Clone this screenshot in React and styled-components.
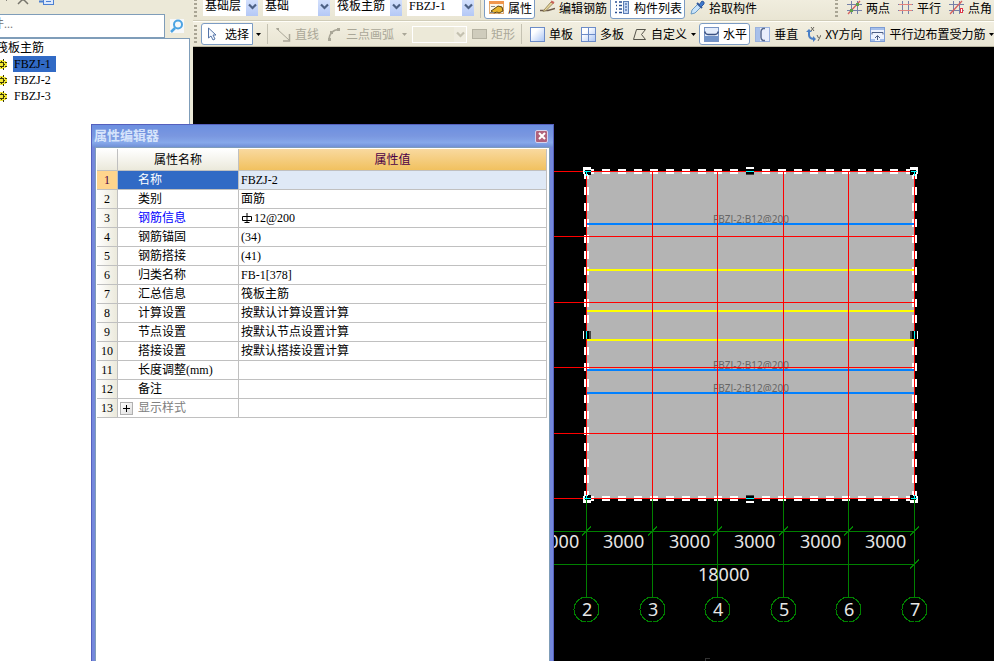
import React from 'react';
import styled, { createGlobalStyle, css } from 'styled-components';

const GlobalStyle = createGlobalStyle`
  * {
    box-sizing: border-box;
  }

  body {
    margin: 0;
    overflow: hidden;
    background: #ece9d8;
    font-family: "Liberation Serif", "Noto Sans CJK SC", sans-serif;
    font-size: 12px;
    color: #000;
  }

  button, input, select {
    font: inherit;
    color: inherit;
    margin: 0;
  }
`;

const App = () => {
  return (
    <Window>
      <GlobalStyle />
      <SidePanel />
      <Workspace>
        <ComponentBar />
        <DrawBar />
        <Drawing />
      </Workspace>
      <PropertyEditor />
    </Window>
  );
};

/* ---------- icons ---------- */

const Icon = ({ children, w = 15, h = 15 }) => (
  <svg width={w} height={h} viewBox={`0 0 ${w} ${h}`} fill="none" aria-hidden="true">
    {children}
  </svg>
);

const ArrowDown = ({ color = '#000' }) => (
  <Icon w={5} h={3}><path d="M0 0h5L2.5 3z" fill={color} /></Icon>
);

const Chevron = ({ color }) => (
  <Icon w={9} h={7}><path d="M1 1.5l3.5 3.5L8 1.5" stroke={color} strokeWidth="2.2" /></Icon>
);

const PropertyIcon = () => (
  <Icon>
    <rect x="0.5" y="1.5" width="14" height="12" fill="#fdf6e6" stroke="#e0aa72" />
    <path d="M0 2.5h15" stroke="#f0964c" strokeWidth="3" />
    <path d="M2 6.5h4" stroke="#8a8a8a" />
    <path d="M2 11l3-2 4-3 4 1 1 4-4 2-2-1-3 1z" fill="#e8b52c" stroke="#5a4310" />
    <path d="M1 12.5h4" stroke="#8a8a8a" />
  </Icon>
);

const PencilIcon = () => (
  <Icon>
    <path d="M0 10.500h8l7-2" stroke="#6b5a4a" strokeWidth="1.500" />
    <path d="M4 10l7-8 2 1.500-7 7-3 1z" fill="#e8d79b" stroke="#9a8c62" />
    <path d="M11 1.500l3 1.500" stroke="#c8635a" strokeWidth="2" />
  </Icon>
);

const ListIcon = () => (
  <Icon>
    <path d="M0 2h2M4 2h3M1 5.500h1M4 5.500h3M1 9h1M4 9h3M0 12.500h2M4 12.500h3" stroke="#2a4f92" strokeWidth="1.5" />
    <rect x="8.5" y="1.5" width="5" height="12" fill="#c6d8f4" stroke="#5d7fb5" />
    <path d="M10 4h2M10 7h2M10 10h2" stroke="#2a4f92" />
  </Icon>
);

const DropperIcon = () => (
  <Icon>
    <path d="M1 14l1-4 6-6 3 3-6 6z" fill="#c9e4fb" stroke="#6a9ac4" />
    <path d="M7 3l5 5" stroke="#31599c" strokeWidth="2" />
    <path d="M9 5l3-4 2 1v2l-3 3z" fill="#3e79cd" stroke="#31599c" />
  </Icon>
);

const AxisIcon = ({ slash, point }) => (
  <Icon>
    <path d="M4.5 1v13M10.5 1v13M0 4.5h15M0 10.5h15" stroke="#7580a8" />
    {slash ? <path d="M1 14L13 1" stroke="#d6605e" strokeWidth="1.3" /> : <path d="M1 4.500h13M1 10.500h13" stroke="#e3837d" />}
    {point === 'two' && <path d="M3 9h3v3H3zM9 3h3v3H9z" fill="#5fa04a" />}
    {point === 'corner' && <rect x="11.500" y="8.500" width="2" height="4" fill="#fff" stroke="#e0384a" />}
  </Icon>
);

const CursorIcon = () => (
  <Icon w={10} h={14}>
    <path d="M1.5 1v10l2.5-2 2 4 2-1-2-4h3z" fill="#f4f8ff" stroke="#5575a8" />
  </Icon>
);

const LineIcon = () => (
  <Icon>
    <path d="M1 2l12 11" stroke="#aaa798" />
    <path d="M13.5 7v7H7" stroke="#aaa798" strokeWidth="1.5" />
    <path d="M0 1h3v2H1z" fill="#aaa798" />
  </Icon>
);

const ArcIcon = () => (
  <Icon>
    <path d="M2 13C2 7 6 2.500 12 2.500" stroke="#aaa798" strokeWidth="1.5" />
    <path d="M1 11h3v3H1zM3 4h3v3H3zM10 1h3v3h-3z" fill="#aaa798" />
  </Icon>
);

const RectIcon = () => (
  <Icon><rect x="0.5" y="2.5" width="14" height="9" fill="#cfccbc" stroke="#b5b2a2" /></Icon>
);

const SlabIcon = ({ multi }) => (
  <Icon>
    <defs>
      <linearGradient id="slab" x1="0" y1="0" x2="1" y2="1">
        <stop offset="0.3" stopColor="#fff" />
        <stop offset="1" stopColor="#a9c4f4" />
      </linearGradient>
    </defs>
    <rect x="0.5" y="0.5" width="14" height="14" fill="url(#slab)" stroke="#6c8cc8" />
    {multi && <path d="M7.5 1v13M1 7.5h13" stroke="#6c8cc8" />}
  </Icon>
);

const PolygonIcon = () => (
  <Icon>
    <path d="M4.5 2.5h9l-4 5 4 5H1.5z" stroke="#55534a" />
  </Icon>
);

const HorizontalIcon = () => (
  <Icon>
    <rect x="0.5" y="0.5" width="14" height="14" fill="#e5edfb" stroke="#7894c4" />
    <path d="M1 9h13v5H1z" fill="#7294c9" />
    <path d="M1 4.500v1q1 2 3 2h7q2 0 3-2v-1" stroke="#3a5080" strokeWidth="1.5" />
  </Icon>
);

const VerticalIcon = () => (
  <Icon>
    <rect x="0.5" y="0.5" width="14" height="14" fill="#e9effc" stroke="#9ab2de" />
    <path d="M1 1h4v13H1z" fill="#a8c0ea" />
    <path d="M10 1.500H8q-2 1-2 3v6q0 2 2 3h2" stroke="#5a6c90" strokeWidth="1.500" />
  </Icon>
);

const XYIcon = () => (
  <Icon>
    <path d="M3 4v4q0 4 6 4" stroke="#4a7fc6" strokeWidth="2" />
    <path d="M0 5l3-3 3 3zM7 9l3 3-3 3z" fill="#4a7fc6" />
    <path d="M5 0l3 4M8 0L5 4M11 8l1.500 3M15 8l-3 6" stroke="#66645c" />
  </Icon>
);

const EdgeIcon = () => (
  <Icon>
    <rect x="0.5" y="0.5" width="14" height="14" fill="#eef3fd" stroke="#7c9cd4" />
    <path d="M1 2h13" stroke="#a5bfea" strokeWidth="2" />
    <path d="M2 7.500V5.500h11v2M7.500 13V9M5 11l2.500-2.500L10 11" stroke="#4d5f85" />
    <path d="M1 13h4M10 13h4" stroke="#a5bfea" strokeWidth="2" />
  </Icon>
);

const GearIcon = () => (
  <Icon w={11} h={11}>
    <path d="M3 1h5v1h2v2h1v3h-1v2H8v1H3V9H1V7H0V4h1V2h2z" fill="#f2e830" />
    <path d="M3.500 0v2M7.500 0v2M3.500 9v2M7.500 9v2M0 3.500h2M0 7.500h2M9 3.500h2M9 7.500h2" stroke="#3a380a" />
    <rect x="3.500" y="3.500" width="4" height="4" stroke="#3a380a" />
    <path d="M5 2h1v1H5zM5 8h1v1H5zM2 5h1v1H2zM8 5h1v1H8z" fill="#3a380a" />
  </Icon>
);

// hot rolled bar grade mark
const RebarIcon = () => (
  <Icon w={11} h={11}>
    <path d="M1.5 3.5h9v4h-9zM6 0v10M3.500 9.500h5" stroke="#000" />
  </Icon>
);

/* ---------- side panel ---------- */

const SidePanel = () => (
  <Side>
    <SideTools>
      <Icon w={5} h={5}><path d="M4 0h2v3" stroke="#222" /></Icon>
      <Icon w={12} h={5}><path d="M1 4l4-4h2l4 4" stroke="#77756c" strokeWidth="1.5" /></Icon>
      <Icon w={15} h={5}>
        <path d="M0 1.5h5" stroke="#4c80d2" strokeWidth="2" />
        <rect x="4.5" y="-4.5" width="10" height="9" fill="#dce8fb" stroke="#4c80d2" />
        <path d="M7 1.5h5" stroke="#4c80d2" />
      </Icon>
    </SideTools>
    <SearchRow>
      <SearchInput aria-label="搜索构件" placeholder="搜索构件..." />
      <SearchButton aria-label="搜索">
        <Icon w={14} h={14}>
          <circle cx="8" cy="5.5" r="4" stroke="#4ba3e3" strokeWidth="2" />
          <path d="M5 9l-4 4" stroke="#4ba3e3" strokeWidth="2.5" />
        </Icon>
      </SearchButton>
    </SearchRow>
    <Tree>
      <TreeRoot>筏板主筋</TreeRoot>
      {['FBZJ-1', 'FBZJ-2', 'FBZJ-3'].map((name, i) => (
        <TreeItem key={name}>
          <GearIcon />
          <TreeLabel $active={i === 0}>{name}</TreeLabel>
        </TreeItem>
      ))}
    </Tree>
  </Side>
);

/* ---------- toolbars ---------- */

const Tool = ({ icon, children, active, disabled, menu }) => (
  <ToolButton $active={active} disabled={disabled}>
    {icon}
    <span>{children}</span>
    {menu && <ArrowDown color={disabled ? '#aaa798' : '#000'} />}
  </ToolButton>
);

const Picker = ({ label, value, width }) => (
  <PickerBox $width={width}>
    <select aria-label={label} defaultValue={value}>
      <option>{value}</option>
    </select>
    <PickerArrow><Chevron color="#4d6185" /></PickerArrow>
  </PickerBox>
);

const ComponentBar = () => (
  <TopBar>
    <Grip />
    <Pickers>
      <Picker label="楼层" value="基础层" width={55} />
      <Picker label="构件类别" value="基础" width={67} />
      <Picker label="构件类型" value="筏板主筋" width={67} />
      <Picker label="构件" value="FBZJ-1" width={67} />
    </Pickers>
    <Divider />
    <Tool active icon={<PropertyIcon />}>属性</Tool>
    <Tool icon={<PencilIcon />}>编辑钢筋</Tool>
    <Tool active icon={<ListIcon />}>构件列表</Tool>
    <Tool icon={<DropperIcon />}>拾取构件</Tool>
    <BarEnd />
    <AxisTools>
      <Grip />
      <Tool icon={<AxisIcon slash point="two" />}>两点</Tool>
      <Tool icon={<AxisIcon />}>平行</Tool>
      <Tool icon={<AxisIcon slash point="corner" />}>点角</Tool>
    </AxisTools>
  </TopBar>
);

const DrawBar = () => (
  <BottomBar>
    <Grip />
    <SelectButton>
      <CursorIcon />
      <span>选择</span>
    </SelectButton>
    <MenuButton aria-label="选择方式"><ArrowDown /></MenuButton>
    <Divider />
    <Tool disabled icon={<LineIcon />}>直线</Tool>
    <Tool disabled menu icon={<ArcIcon />}>三点画弧</Tool>
    <PickerBox $width={55} $off>
      <select aria-label="画法" disabled />
      <PickerArrow $off><Chevron color="#c4c1b0" /></PickerArrow>
    </PickerBox>
    <Tool disabled icon={<RectIcon />}>矩形</Tool>
    <Divider />
    <Tool icon={<SlabIcon />}>单板</Tool>
    <Tool icon={<SlabIcon multi />}>多板</Tool>
    <Tool menu icon={<PolygonIcon />}>自定义</Tool>
    <Tool active icon={<HorizontalIcon />}>水平</Tool>
    <Tool icon={<VerticalIcon />}>垂直</Tool>
    <Tool icon={<XYIcon />}>XY方向</Tool>
    <Tool menu icon={<EdgeIcon />}>平行边布置受力筋</Tool>
  </BottomBar>
);

/* ---------- drawing ---------- */

const AXIS_X = [586, 652, 717, 783, 848, 914];
const AXIS_Y = [171, 236, 302, 367, 433, 498];
const BARS = [
  [223, '#0080ff'], [269, '#ffff00'], [310, '#ffff00'],
  [339, '#ffff00'], [369, '#0080ff'], [392, '#0080ff'],
];

const Drawing = () => (
  <Canvas>
    {/* model space origin is the window corner */}
    <g transform="translate(-193 -47)" shapeRendering="crispEdges">
      <rect x="586" y="171" width="328" height="327" fill="#b4b4b4" />
      {[223, 369, 392].map((y) => (
        <BarText key={y} x="713" y={y}>FBZJ-2:B12@200</BarText>
      ))}
      <path d="M586 171.5H914M586 498.5H914M586.5 171V498M914.5 171V498" stroke="#fff" strokeWidth="5" strokeDasharray="8 8" />
      {BARS.map(([y, color]) => (
        <rect key={y} x="587" y={y} width="327" height="2" fill={color} />
      ))}
      {AXIS_Y.map((y) => <rect key={y} x="500" y={y} width="415" height="1" fill="#f00" />)}
      {AXIS_X.map((x) => <rect key={x} x={x} y="171" width="1" height="327" fill="#f00" />)}

      {[586, 914].map((x) => [171, 498].map((y) => {
        const sx = x === 586 ? 1 : -1;
        const sy = y === 171 ? 1 : -1;
        return (
          <g key={`${x}-${y}`} transform={`translate(${x + 0.5} ${y + 0.5}) scale(${sx} ${sy})`}>
            <path d="M-3.5-4.5h8v2h-3v5h-5z" fill="#fff" />
            <path d="M-1.5-1.5h6v5h-3v-1h-3z" fill="#000" />
            <path d="M-2.5 0H4M0 0V4" stroke="#0ff" />
          </g>
        );
      }))}
      {[171, 498].map((y) => (
        <g key={y} transform={`translate(750 ${y + 0.5}) scale(1 ${y === 171 ? 1 : -1})`}>
          <path d="M-4-4.5h8v2h-8z" fill="#fff" />
          <path d="M-4-2.5h8v5h-8z" fill="#000" />
          <path d="M-4 2.5h8v1h-8z" fill="#444" />
          <path d="M-4 0h8" stroke="#0ff" />
        </g>
      ))}
      {[586, 914].map((x) => (
        <g key={x} transform={`translate(${x + 0.5} 335) scale(${x === 586 ? 1 : -1} 1)`}>
          <path d="M-3.5-4h1v8h-1z" fill="#fff" />
          <path d="M-2.5-4h5v8h-5z" fill="#000" />
          <path d="M2.5-4h2v8h-2z" fill="#444" />
          <path d="M0-4v8" stroke="#0ff" />
        </g>
      ))}

      <g stroke="#008000">
        <path d="M500 531.5H914M500 564.5H914M910 568.5l9-9" />
        {AXIS_X.map((x) => (
          <path key={x} d={`M${x + 0.5} 499V597M${x - 4} 535.5l9-9`} />
        ))}
        {AXIS_X.map((x) => (
          <circle key={x} cx={x + 0.5} cy="609.5" r="12.5" />
        ))}
      </g>
      {[538, 603, 669, 734, 800, 865].map((x) => (
        <DimText key={x} x={x} y="548">3000</DimText>
      ))}
      <DimText x="698" y="581">18000</DimText>
      {AXIS_X.map((x, i) => (
        <DimText key={x} x={x - 4} y="616">{i + 2}</DimText>
      ))}
      <path d="M705 658.5h5M705.5 658v3" stroke="#333" />
    </g>
  </Canvas>
);

/* ---------- property editor ---------- */

const PROPS = [
  ['名称', 'FBZJ-2'],
  ['类别', '面筋'],
  ['钢筋信息', '12@200'],
  ['钢筋锚固', '(34)'],
  ['钢筋搭接', '(41)'],
  ['归类名称', 'FB-1[378]'],
  ['汇总信息', '筏板主筋'],
  ['计算设置', '按默认计算设置计算'],
  ['节点设置', '按默认节点设置计算'],
  ['搭接设置', '按默认搭接设置计算'],
  ['长度调整(mm)', ''],
  ['备注', ''],
  ['显示样式', ''],
];

const PropertyEditor = () => (
  <Dialog role="dialog" aria-label="属性编辑器">
    <TitleBar>
      <Title>属性编辑器</Title>
      <CloseButton aria-label="关闭">
        <Icon w={8} h={8}><path d="M1 1l6 6M7 1L1 7" stroke="#fff" strokeWidth="2" /></Icon>
      </CloseButton>
    </TitleBar>
    <DialogBody>
      <Grid>
        <colgroup>
          <col width="21" />
          <col width="121" />
          <col />
        </colgroup>
        <thead>
          <tr>
            <HeadCell />
            <HeadCell>属性名称</HeadCell>
            <HeadCell $active>属性值</HeadCell>
          </tr>
        </thead>
        <tbody>
          {PROPS.map(([name, value], i) => (
            <tr key={name}>
              <NumCell $active={i === 0}>{i + 1}</NumCell>
              <NameCell $active={i === 0} $link={i === 2} $dim={i === 12}>
                <NameInner>
                  <Gutter>
                    {i === 12 && (
                      <Expander aria-label="展开">
                        <Icon w={7} h={7}><path d="M0 3.5h7M3.5 0v7" stroke="#000" /></Icon>
                      </Expander>
                    )}
                  </Gutter>
                  {name}
                </NameInner>
              </NameCell>
              <ValueCell $active={i === 0}>
                <ValueInner>
                  {i === 2 && <RebarIcon />}
                  {value}
                </ValueInner>
              </ValueCell>
            </tr>
          ))}
        </tbody>
      </Grid>
    </DialogBody>
  </Dialog>
);

/* ---------- styles ---------- */

const Window = styled.div`
  position: relative;
  display: flex;
  height: 100vh;
  overflow: hidden;
`;

/* the docked panel runs past the left edge of the window */
const Side = styled.aside`
  flex: none;
  display: flex;
  flex-direction: column;
  width: 253px;
  margin-left: -60px;
  padding-right: 3px;
  background: #ece9d8;
`;

const SideTools = styled.div`
  display: flex;
  gap: 10px;
  height: 13px;
  padding-left: 62px;
`;

const SearchRow = styled.div`
  display: flex;
  align-items: center;
  gap: 5px;
  height: 25px;
`;

const SearchInput = styled.input`
  width: 225px;
  height: 24px;
  padding: 0 0 2px 15px;
  border: 1px solid #7f9db9;
  background: #fff;
  outline: none;

  &::placeholder {
    color: #777;
    opacity: 1;
  }
`;

const SearchButton = styled.button`
  display: flex;
  padding: 0;
  border: 0;
  background: #f6f8fa;
`;

const Tree = styled.ul`
  flex: 1;
  margin: 0;
  padding: 1px 0 0;
  list-style: none;
  background: #fff;
  border-top: 1px solid #7f9db9;
  border-right: 1px solid #7f9db9;
`;

const TreeRoot = styled.li`
  height: 16px;
  padding-left: 56px;
  line-height: 16px;
`;

const TreeItem = styled.li`
  display: flex;
  align-items: center;
  gap: 6px;
  height: 16px;
  padding-left: 56px;
`;

const TreeLabel = styled.span`
  padding: 0 5px 0 1px;
  line-height: 16px;
  background: ${(p) => (p.$active ? '#316ac5' : 'transparent')};
`;

const Workspace = styled.main`
  flex: 1;
  min-width: 0;
  display: flex;
  flex-direction: column;
`;

const Bar = styled.div`
  flex: none;
  display: flex;
  align-items: center;
  overflow: hidden;
  background: linear-gradient(#f2efe1, #e9e5d3);
`;

/* upper strip is partly scrolled under the title area */
const TopBar = styled(Bar)`
  height: 26px;
  margin-top: -5px;
  border-bottom: 1px solid #d0ccb8;
`;

const BottomBar = styled(Bar)`
  height: 26px;
  border-top: 1px solid #fffef8;
  border-bottom: 1px solid #b8b4a0;
`;

const Grip = styled.span`
  flex: none;
  width: 3px;
  height: 18px;
  margin: 0 4px 0 1px;
  background: repeating-linear-gradient(#a9a594 0 2px, transparent 2px 4px);
`;

const Divider = styled.span`
  flex: none;
  width: 1px;
  height: 20px;
  margin: 0 3px;
  background: #c5c2b2;
`;

const BarEnd = styled.span`
  width: 1px;
  height: 26px;
  background: #c5c2b2;
`;

const AxisTools = styled.div`
  display: flex;
  align-items: center;
  margin-left: 74px;
`;

const ToolButton = styled.button`
  flex: none;
  display: flex;
  align-items: center;
  gap: 4px;
  height: 22px;
  padding: 0 2px 0 4px;
  border: 1px solid transparent;
  border-radius: 3px;
  background: none;
  font-family: "Noto Sans CJK SC", sans-serif;
  line-height: 14px;
  white-space: nowrap;

  &:disabled {
    color: #aaa798;
  }

  &:disabled span + svg {
    margin-left: 4px;
  }

  ${(p) => p.$active && css`
    background: #fff;
    border-color: #7c9cc4;
  `}
`;

const SelectButton = styled(ToolButton)`
  gap: 8px;
  padding: 0 3px 0 5px;
  background: #fff;
  border-color: #7c9cc4;
  border-radius: 3px 0 0 3px;
`;

const MenuButton = styled.button`
  display: flex;
  padding: 0 3px;
  border: 0;
  background: none;
`;

const Pickers = styled.div`
  display: flex;
  gap: 5px;
  height: 20px;
  margin: 0 3px 3px 2px;
`;

const PickerBox = styled.span`
  flex: none;
  display: grid;
  width: ${(p) => p.$width}px;
  height: ${(p) => (p.$off ? 17 : 20)}px;
  margin-left: ${(p) => (p.$off ? 2 : 0)}px;
  background: ${(p) => (p.$off ? '#ece9d8' : '#fff')};
  border: ${(p) => (p.$off ? '1px solid #fff' : '0')};

  select {
    grid-area: 1 / 1;
    min-width: 0;
    padding: 0 0 0 2px;
    appearance: none;
    border: 0;
    background: none;
    outline: none;
  }
`;

const PickerArrow = styled.span`
  grid-area: 1 / 1;
  justify-self: end;
  display: flex;
  align-items: center;
  justify-content: center;
  width: 12px;
  pointer-events: none;
  background: ${(p) => (p.$off ? '#efecdf' : 'linear-gradient(#dbe6fe, #b4c8f6)')};
`;

const Canvas = styled.svg`
  flex: 1;
  width: 100%;
  min-height: 0;
  background: #000;
  fill: none;
`;

const DimText = styled.text`
  font-family: "Noto Sans", sans-serif;
  font-size: 18px;
  fill: #e6e6e6;
`;

const BarText = styled.text`
  font-family: "Noto Sans", sans-serif;
  font-size: 10px;
  fill: #666;
`;

const Dialog = styled.section`
  position: absolute;
  top: 124px;
  bottom: 0;
  left: 91px;
  display: flex;
  flex-direction: column;
  width: 463px;
  border: solid #5560bd;
  border-width: 1px 1px 0;
  background: #7488dc;
`;

const TitleBar = styled.header`
  display: flex;
  align-items: center;
  justify-content: space-between;
  height: 22px;
  padding: 0 5px 0 2px;
  background: linear-gradient(#6c8fe0, #7a97e0 50%, #86a8ea 80%, #7190d6);
`;

const Title = styled.h1`
  margin: 0;
  font-size: 13px;
  line-height: 22px;
  color: #d6e4fb;
`;

const CloseButton = styled.button`
  display: flex;
  align-items: center;
  justify-content: center;
  width: 13px;
  height: 13px;
  padding: 0;
  border: 1px solid #d5d3ee;
  border-radius: 2px;
  background: #b0627c;
`;

const DialogBody = styled.div`
  flex: 1;
  margin: 0 3px;
  padding: 1px 2px 0 1px;
  border: solid #7f9db9;
  border-width: 1px 1px 0;
  background: #fff;
`;

const Grid = styled.table`
  width: 100%;
  table-layout: fixed;
  border-collapse: separate;
  border-spacing: 0;
`;

const cell = css`
  height: 19px;
  padding: 0;
  border: solid #c0c0c0;
  border-width: 0 1px 1px 0;
  line-height: 18px;
  white-space: nowrap;
`;

const HeadCell = styled.th`
  ${cell}
  height: 22px;
  font-weight: 400;
  color: ${(p) => (p.$active ? '#4b0046' : '#000')};
  background: ${(p) => (p.$active
    ? 'linear-gradient(#f9d99f, #f1c15f)'
    : 'linear-gradient(#fff, #ebe9db)')};
`;

const NumCell = styled.td`
  ${cell}
  text-align: center;
  color: ${(p) => (p.$active ? '#4b0046' : '#000')};
  background: ${(p) => (p.$active ? '#ffd58d' : 'linear-gradient(90deg, #fff, #ebe9db)')};
`;

const NameCell = styled.td`
  ${cell}
  color: ${(p) => (p.$active ? '#fff' : p.$link ? '#00f' : p.$dim ? '#808080' : '#000')};
  background: ${(p) => (p.$active ? '#316ac5' : '#fff')};
`;

const NameInner = styled.div`
  display: flex;
  align-items: center;
  height: 18px;
`;

const Gutter = styled.span`
  display: flex;
  width: 20px;
  padding-left: 2px;
`;

const Expander = styled.button`
  display: flex;
  align-items: center;
  justify-content: center;
  width: 13px;
  height: 13px;
  padding: 0;
  border: 1px solid #b0b0b0;
  background: linear-gradient(135deg, #fff, #ddd);
`;

const ValueCell = styled.td`
  ${cell}
  background: ${(p) => (p.$active ? '#dfe9f6' : '#fff')};
`;

const ValueInner = styled.div`
  display: flex;
  align-items: center;
  gap: 2px;
  height: 18px;
  padding-left: 2px;
`;

export default App;
